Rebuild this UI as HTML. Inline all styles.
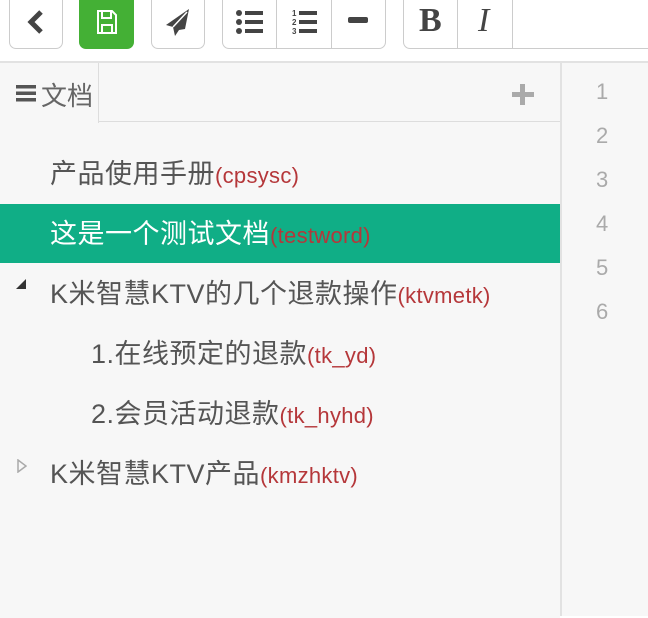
<!DOCTYPE html><html><head><meta charset="utf-8"><style>
body{margin:0;width:648px;height:616px;background:#fff;position:relative;overflow:hidden;font-family:"Liberation Sans","Noto Sans CJK SC",sans-serif}
.b{position:absolute;top:-6px;height:55px;border:1px solid #ccc;border-radius:0 0 7px 7px;background:#fff;box-sizing:border-box;display:flex;align-items:center;justify-content:center}
.seg{position:absolute;top:-6px;height:55px;border-left:1px solid #ccc}
.side{position:absolute;left:0;top:61px;width:560px;height:555px;background:#f7f7f7;border-top:2px solid #e2e2e2}
.gut{position:absolute;left:560px;top:61px;width:88px;height:555px;background:#f7f7f7;border-top:2px solid #e2e2e2;border-left:2px solid #e2e2e2;box-sizing:border-box}
.ln{position:absolute;left:596px;color:#aaa;font-size:22px}
.it{position:absolute;font-size:27px;letter-spacing:0.5px;color:#555;white-space:nowrap;line-height:30px}
.it span{color:#b5373a;font-size:22px;letter-spacing:0.3px}
</style></head><body>
<div class="b" style="left:9px;width:54px"><svg width="20" height="26" viewBox="0 0 20 26"><path d="M15 3L5 13l10 10" fill="none" stroke="#444" stroke-width="5"/></svg></div>
<div class="b" style="left:79px;width:55px;background:#44b035;border-color:#44b035"><svg width="22" height="26" viewBox="0 0 22 26"><path d="M2 2h14l4 4v18H2z M6 2v7h9V2 M6 24v-8h10v8" fill="none" stroke="#fff" stroke-width="2"/></svg></div>
<div class="b" style="left:151px;width:54px"><svg width="26" height="30" viewBox="0 0 26 30"><path d="M24 2L1 18l7 2 2 9 4-6 6-1z" fill="#444"/><path d="M8 20L22 5" stroke="#fff" stroke-width="1.5"/></svg></div>
<div class="b" style="left:222px;width:164px"></div>
<div class="seg" style="left:276px"></div><div class="seg" style="left:331px"></div>
<svg style="position:absolute;left:236px;top:10px" width="28" height="24"><circle cx="3" cy="3" r="3" fill="#444"/><circle cx="3" cy="12" r="3" fill="#444"/><circle cx="3" cy="21" r="3" fill="#444"/><rect x="9" y="1" width="18" height="4" fill="#444"/><rect x="9" y="10" width="18" height="4" fill="#444"/><rect x="9" y="19" width="18" height="4" fill="#444"/></svg>
<svg style="position:absolute;left:292px;top:8px" width="26" height="28"><text x="0" y="8" font-size="8" font-weight="bold" fill="#444">1</text><text x="0" y="17" font-size="8" font-weight="bold" fill="#444">2</text><text x="0" y="26" font-size="8" font-weight="bold" fill="#444">3</text><rect x="7" y="3" width="18" height="4" fill="#444"/><rect x="7" y="12" width="18" height="4" fill="#444"/><rect x="7" y="21" width="18" height="4" fill="#444"/></svg>
<div style="position:absolute;left:348px;top:17px;width:20px;height:6px;background:#444;border-radius:2px"></div>
<div class="b" style="left:403px;width:260px"></div>
<div class="seg" style="left:457px"></div><div class="seg" style="left:512px"></div>
<div style="position:absolute;left:419px;top:2px;font:bold 34px 'Liberation Serif',serif;color:#444">B</div>
<div style="position:absolute;left:478px;top:2px;font:italic 34px 'Liberation Serif',serif;color:#444">I</div>
<div class="side">
<div style="position:absolute;left:0;top:0;width:99px;height:60px;border-right:1px solid #ddd;box-sizing:border-box;background:#f7f7f7"></div>
<div style="position:absolute;left:99px;top:58px;width:461px;border-top:1px solid #ddd"></div>
<svg style="position:absolute;left:16px;top:22px" width="20" height="17"><rect y="0" width="20" height="3.5" fill="#555"/><rect y="6.5" width="20" height="3.5" fill="#555"/><rect y="13" width="20" height="3.5" fill="#555"/></svg>
<div style="position:absolute;left:41px;top:13px;font-size:26px;color:#666">文档</div>
<div style="position:absolute;left:512px;top:29px;width:22px;height:5px;background:#aaa"></div>
<div style="position:absolute;left:520px;top:21px;width:5px;height:21px;background:#aaa"></div>
<div style="position:absolute;left:0;top:141px;width:560px;height:59px;background:#10ae86"></div>
</div>
<div class="it" style="left:50px;top:159px">产品使用手册<span>(cpsysc)</span></div>
<div class="it" style="left:50px;top:219px;color:#fff">这是一个测试文档<span style="color:#b5373a">(testword)</span></div>
<svg style="position:absolute;left:16px;top:279px" width="10" height="10"><path d="M10 0V10H0z" fill="#333"/></svg>
<div class="it" style="left:50px;top:279px">K米智慧KTV的几个退款操作<span>(ktvmetk)</span></div>
<div class="it" style="left:91px;top:339px">1.在线预定的退款<span>(tk_yd)</span></div>
<div class="it" style="left:91px;top:399px">2.会员活动退款<span>(tk_hyhd)</span></div>
<svg style="position:absolute;left:17px;top:459px" width="10" height="14"><path d="M1 1L9 7 1 13z" fill="none" stroke="#aaa" stroke-width="1.5"/></svg>
<div class="it" style="left:50px;top:459px">K米智慧KTV产品<span>(kmzhktv)</span></div>
<div class="gut"></div>
<div class="ln" style="top:79px">1</div><div class="ln" style="top:123px">2</div><div class="ln" style="top:167px">3</div><div class="ln" style="top:211px">4</div><div class="ln" style="top:255px">5</div><div class="ln" style="top:299px">6</div>
</body></html>
